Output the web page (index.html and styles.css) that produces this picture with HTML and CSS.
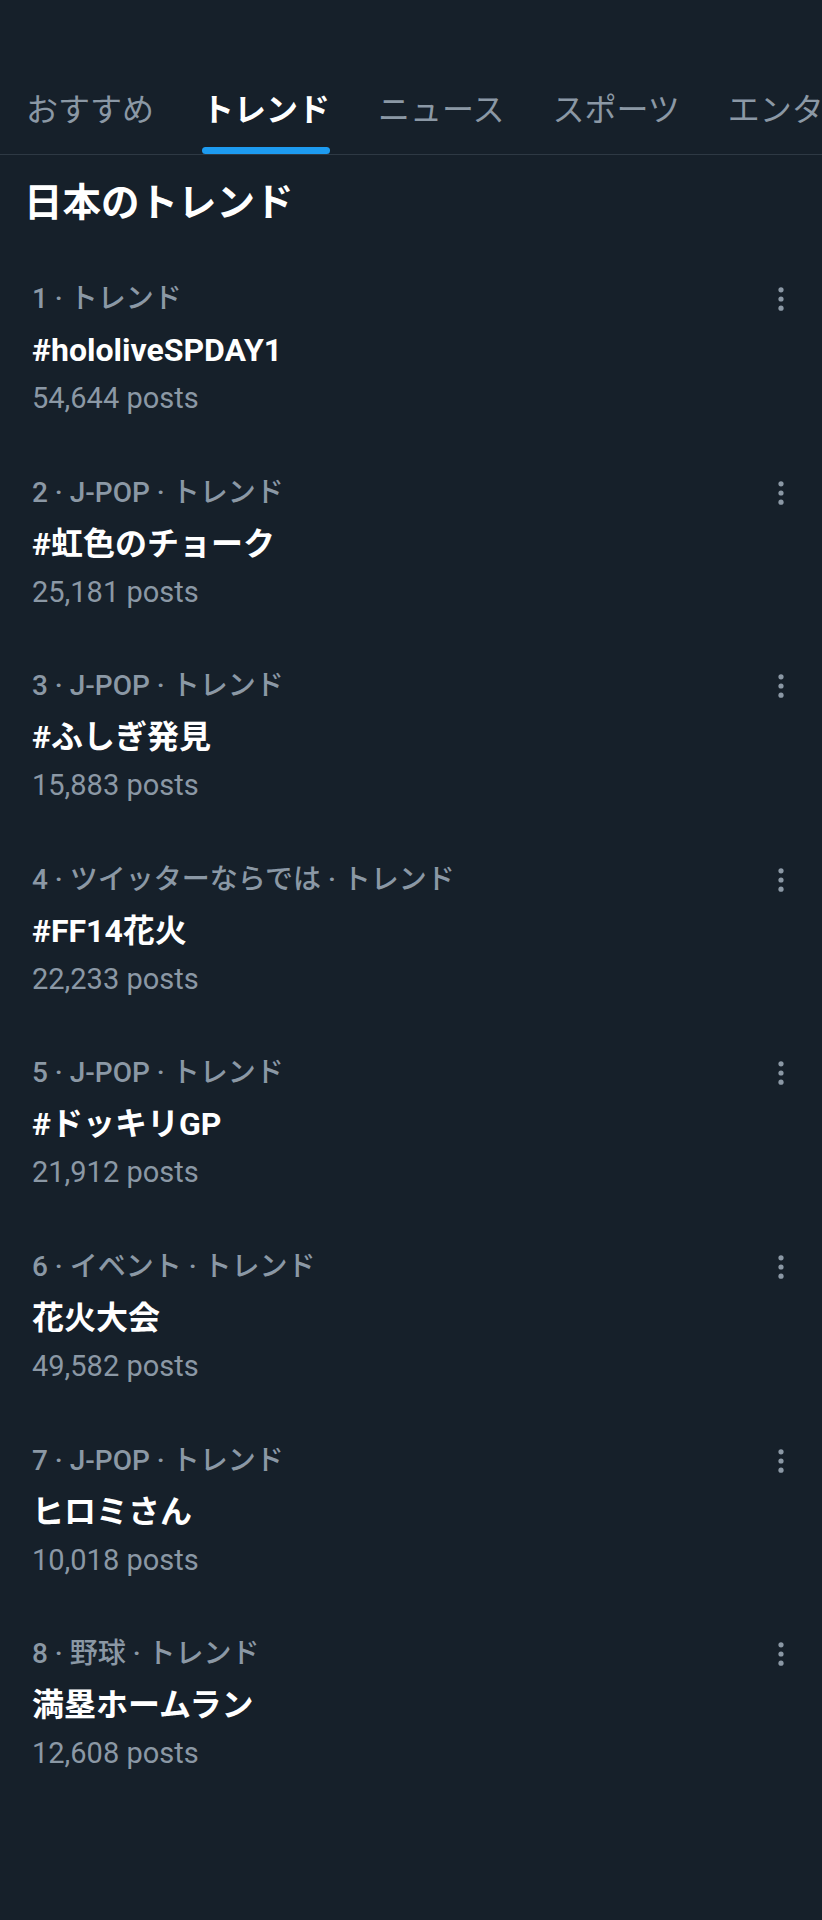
FILE: index.html
```html
<!DOCTYPE html>
<html lang="ja">
<head>
    <meta charset="UTF-8">
    <meta name="viewport" content="width=device-width, initial-scale=1.0">
    <title>トレンド</title>
    <link rel="stylesheet" href="styles.css">
</head>
<body>
    <nav class="tabs">
        <div class="tab"><span class="tab-label">おすすめ</span><span class="tab-bar"></span></div>
        <div class="tab active"><span class="tab-label">トレンド</span><span class="tab-bar"></span></div>
        <div class="tab"><span class="tab-label">ニュース</span><span class="tab-bar"></span></div>
        <div class="tab"><span class="tab-label">スポーツ</span><span class="tab-bar"></span></div>
        <div class="tab"><span class="tab-label">エンタメ</span><span class="tab-bar"></span></div>
    </nav>

    <h2 class="section-title">日本のトレンド</h2>

    <div class="trend-list">
        <div class="trend">
            <div class="trend-meta">
                <span>1 · トレンド</span>
                <svg class="more" viewBox="0 0 24 24"><circle cx="12" cy="2.8" r="2.6"/><circle cx="12" cy="12" r="2.6"/><circle cx="12" cy="21.2" r="2.6"/></svg>
            </div>
            <div class="trend-name">#hololiveSPDAY1</div>
            <div class="trend-count">54,644 posts</div>
        </div>
        <div class="trend">
            <div class="trend-meta">
                <span>2 · J-POP · トレンド</span>
                <svg class="more" viewBox="0 0 24 24"><circle cx="12" cy="2.8" r="2.6"/><circle cx="12" cy="12" r="2.6"/><circle cx="12" cy="21.2" r="2.6"/></svg>
            </div>
            <div class="trend-name">#虹色のチョーク</div>
            <div class="trend-count">25,181 posts</div>
        </div>
        <div class="trend">
            <div class="trend-meta">
                <span>3 · J-POP · トレンド</span>
                <svg class="more" viewBox="0 0 24 24"><circle cx="12" cy="2.8" r="2.6"/><circle cx="12" cy="12" r="2.6"/><circle cx="12" cy="21.2" r="2.6"/></svg>
            </div>
            <div class="trend-name">#ふしぎ発見</div>
            <div class="trend-count">15,883 posts</div>
        </div>
        <div class="trend">
            <div class="trend-meta">
                <span>4 · ツイッターならでは · トレンド</span>
                <svg class="more" viewBox="0 0 24 24"><circle cx="12" cy="2.8" r="2.6"/><circle cx="12" cy="12" r="2.6"/><circle cx="12" cy="21.2" r="2.6"/></svg>
            </div>
            <div class="trend-name">#FF14花火</div>
            <div class="trend-count">22,233 posts</div>
        </div>
        <div class="trend">
            <div class="trend-meta">
                <span>5 · J-POP · トレンド</span>
                <svg class="more" viewBox="0 0 24 24"><circle cx="12" cy="2.8" r="2.6"/><circle cx="12" cy="12" r="2.6"/><circle cx="12" cy="21.2" r="2.6"/></svg>
            </div>
            <div class="trend-name">#ドッキリGP</div>
            <div class="trend-count">21,912 posts</div>
        </div>
        <div class="trend">
            <div class="trend-meta">
                <span>6 · イベント · トレンド</span>
                <svg class="more" viewBox="0 0 24 24"><circle cx="12" cy="2.8" r="2.6"/><circle cx="12" cy="12" r="2.6"/><circle cx="12" cy="21.2" r="2.6"/></svg>
            </div>
            <div class="trend-name">花火大会</div>
            <div class="trend-count">49,582 posts</div>
        </div>
        <div class="trend">
            <div class="trend-meta">
                <span>7 · J-POP · トレンド</span>
                <svg class="more" viewBox="0 0 24 24"><circle cx="12" cy="2.8" r="2.6"/><circle cx="12" cy="12" r="2.6"/><circle cx="12" cy="21.2" r="2.6"/></svg>
            </div>
            <div class="trend-name">ヒロミさん</div>
            <div class="trend-count">10,018 posts</div>
        </div>
        <div class="trend">
            <div class="trend-meta">
                <span>8 · 野球 · トレンド</span>
                <svg class="more" viewBox="0 0 24 24"><circle cx="12" cy="2.8" r="2.6"/><circle cx="12" cy="12" r="2.6"/><circle cx="12" cy="21.2" r="2.6"/></svg>
            </div>
            <div class="trend-name">満塁ホームラン</div>
            <div class="trend-count">12,608 posts</div>
        </div>
    </div>
</body>
</html>
```

FILE: styles.css
```css
html, body {
    overflow-x: hidden;
}
body {
    margin: 0;
    background-color: #16202a;
    color: #f7f9f9;
    font-family: Roboto, "Noto Sans CJK JP", sans-serif;
    min-height: 1920px;
}

/* top tab bar */
.tabs {
    display: flex;
    gap: 48px;
    padding: 90px 0 0 26px;
    border-bottom: 1px solid #2e3944;
    white-space: nowrap;
    overflow: hidden;
}
.tab {
    display: flex;
    flex-direction: column;
    gap: 17px;
    flex-shrink: 0;
}
.tab-label {
    font-size: 32px;
    line-height: 40px;
    color: #8b98a5;
}
.tab-bar {
    height: 7px;
    border-radius: 4px;
    background-color: transparent;
}
.tab.active .tab-label {
    color: #fff;
    font-weight: bold;
}
.tab.active .tab-bar {
    background-color: #1d9bf0;
}

.section-title {
    margin: 24px 0 0;
    padding-left: 24px;
    font-size: 38.5px;
    line-height: 48px;
    font-weight: bold;
    color: #fff;
}

/* trends */
.trend-list {
    margin-top: 23px;
}
.trend {
    padding: 26px 29px 25.6px 32px;
}
.trend-meta {
    display: flex;
    justify-content: space-between;
    align-items: center;
    font-size: 28px;
    font-weight: 500;
    line-height: 46px;
    color: #8b98a5;
}
.more {
    width: 24px;
    height: 24px;
    fill: #8b98a5;
}
.trend-name {
    font-size: 32px;
    line-height: 56px;
    font-weight: bold;
    color: #fff;
}
.trend-count {
    font-size: 29px;
    line-height: 40px;
    color: #8b98a5;
}
```
